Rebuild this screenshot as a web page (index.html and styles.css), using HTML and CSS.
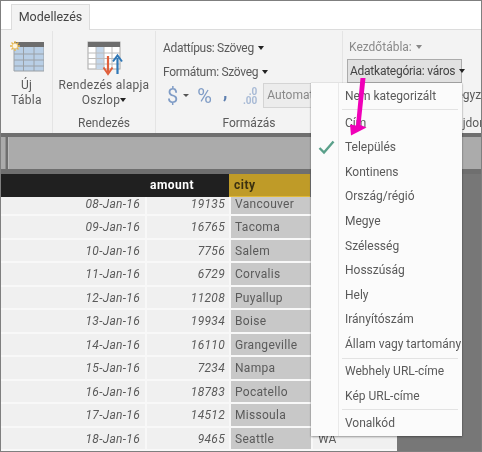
FILE: index.html
```html
<!DOCTYPE html>
<html lang="hu">
<head>
<meta charset="utf-8">
<title>Modellezés</title>
<link rel="stylesheet" href="styles.css">
</head>
<body>
<div class="frame">
  <div class="tabbar"><div class="tab">Modellezés</div></div>
  <div class="ribbon">
    <section class="group g-new">
      <div class="group-body center">
        <svg class="ico-new" width="36" height="36" viewBox="0 0 36 36">
          <rect x="6" y="1" width="30" height="29" fill="#b9cfe6" stroke="none"/>
          <rect x="6" y="1" width="30" height="5" fill="#6d6d6d"/>
          <path d="M6 6V30H36V6M6 13H36M6 19H36M6 25H36M15.500 6V30M26 6V30" fill="none" stroke="#9aa0a6" stroke-width="1"/>
          <path d="M7 0V10M2 5H12M3.500 1.500L10.500 8.500M10.500 1.500L3.500 8.500" stroke="#e8b84a" stroke-width="1.300"/>
          <circle cx="7" cy="5" r="2.800" fill="#fdf6e0" stroke="#eab95a" stroke-width=".7"/>
        </svg>
        <div class="big-label">Új<br>Tábla</div>
      </div>
    </section>
    <section class="group g-sort">
      <div class="group-body center">
        <svg class="ico-sort" width="36" height="36" viewBox="0 0 36 36">
          <rect x="1" y="1" width="32" height="27" fill="#fff" stroke="#a8a8a8"/>
          <rect x="1" y="1" width="32" height="5" fill="#6d6d6d"/>
          <rect x="9" y="6" width="8" height="22" fill="#c5d7ea"/>
          <path d="M1 12H33M1 17.500H33M1 23H33M9 6V28M17 6V28M25 6V28" stroke="#bcbcbc" fill="none"/>
          <path d="M21 15V31" stroke="#e0603c" stroke-width="2.200"/>
          <path d="M16.500 26.500L21 33L25.500 26.500" fill="none" stroke="#e0603c" stroke-width="2"/>
          <path d="M30.500 17V33" stroke="#2f78b7" stroke-width="2.200"/>
          <path d="M26 20.500L30.500 14.500L35 20.500" fill="none" stroke="#2f78b7" stroke-width="2"/>
        </svg>
        <div class="big-label">Rendezés alapja<br>Oszlop<span class="caret"></span></div>
      </div>
      <div class="group-label">Rendezés</div>
    </section>
    <section class="group g-format">
      <div class="group-body">
        <div class="r-row tight">Adattípus: Szöveg<span class="caret gap"></span></div>
        <div class="r-row tight">Formátum: Szöveg<span class="caret gap"></span></div>
        <div class="r-row tools">
          <span class="sym dollar">$</span>
          <span class="caret small"></span>
          <span class="sym percent">%</span>
          <span class="sym comma">,</span>
          <span class="decimals"><span>.0</span><span>.00</span></span>
          <span class="auto">Automatikus</span>
        </div>
      </div>
      <div class="group-label">Formázás</div>
    </section>
    <section class="group g-props">
      <div class="group-body">
        <div class="r-row muted">Kezdőtábla:<span class="caret gap grey"></span></div>
        <div class="cat-btn">Adatkategória: város<span class="caret gap"></span></div>
        <div class="r-row behind">Megjegyzés</div>
      </div>
      <div class="group-label props-label">Tulajdonságok</div>
    </section>
  </div>
  <div class="formula-wrap">
    <div class="formula-stub"></div>
    <div class="formula"></div>
  </div>
  <div class="table-area">
    <div class="table">
      <div class="thead">
        <div class="th c-date"></div>
        <div class="th c-amount">amount</div>
        <div class="th c-city">city</div>
      </div>
      <div class="tbody">
        <div class="rows">
          <div class="row"><div class="c-date">08-Jan-16</div><div class="c-amount">19135</div><div class="c-city">Vancouver</div><div class="c-state">WA</div></div>
          <div class="row"><div class="c-date">09-Jan-16</div><div class="c-amount">16765</div><div class="c-city">Tacoma</div><div class="c-state">WA</div></div>
          <div class="row"><div class="c-date">10-Jan-16</div><div class="c-amount">7756</div><div class="c-city">Salem</div><div class="c-state">OR</div></div>
          <div class="row"><div class="c-date">11-Jan-16</div><div class="c-amount">6729</div><div class="c-city">Corvalis</div><div class="c-state">OR</div></div>
          <div class="row"><div class="c-date">12-Jan-16</div><div class="c-amount">11208</div><div class="c-city">Puyallup</div><div class="c-state">WA</div></div>
          <div class="row"><div class="c-date">13-Jan-16</div><div class="c-amount">19934</div><div class="c-city">Boise</div><div class="c-state">ID</div></div>
          <div class="row"><div class="c-date">14-Jan-16</div><div class="c-amount">16110</div><div class="c-city">Grangeville</div><div class="c-state">ID</div></div>
          <div class="row"><div class="c-date">15-Jan-16</div><div class="c-amount">7234</div><div class="c-city">Nampa</div><div class="c-state">ID</div></div>
          <div class="row"><div class="c-date">16-Jan-16</div><div class="c-amount">18783</div><div class="c-city">Pocatello</div><div class="c-state">ID</div></div>
          <div class="row"><div class="c-date">17-Jan-16</div><div class="c-amount">14512</div><div class="c-city">Missoula</div><div class="c-state">MT</div></div>
          <div class="row"><div class="c-date">18-Jan-16</div><div class="c-amount">9465</div><div class="c-city">Seattle</div><div class="c-state">WA</div></div>
          <div class="row"><div class="c-date"></div><div class="c-amount"></div><div class="c-city"></div><div class="c-state"></div></div>
        </div>
      </div>
    </div>
  </div>
  <div class="menu">
    <div class="item">Nem kategorizált</div>
    <div class="sep"></div>
    <div class="item">Cím</div>
    <div class="item checked">
      <svg class="check" width="17" height="15" viewBox="0 0 17 15"><path d="M1.500 8L6 12.500L15.500 1.500" fill="none" stroke="#5aa08a" stroke-width="2.400"/></svg>
      Település
    </div>
    <div class="item">Kontinens</div>
    <div class="item">Ország/régió</div>
    <div class="item">Megye</div>
    <div class="item">Szélesség</div>
    <div class="item">Hosszúság</div>
    <div class="item">Hely</div>
    <div class="item">Irányítószám</div>
    <div class="item">Állam vagy tartomány</div>
    <div class="sep"></div>
    <div class="item">Webhely URL-címe</div>
    <div class="item">Kép URL-címe</div>
    <div class="sep"></div>
    <div class="item">Vonalkód</div>
  </div>
  <svg class="arrow" width="30" height="64" viewBox="0 0 30 64">
    <path d="M15.500 0H20.500L15.500 47L21.500 49.500L6 57.500L5 46.500L11 47.500Z" fill="#f000b8"/>
  </svg>
</div>
</body>
</html>
```

FILE: styles.css
```css
* { box-sizing: border-box; }
html, body { margin: 0; padding: 0; background: #fff; }
body { width: 482px; height: 452px; overflow: hidden; font-family: Roboto, "Open Sans", sans-serif; font-size: 12px; color: #5a5a5a; }

.frame { position: relative; width: 482px; height: 452px; border: 1px solid #7f7f7f; overflow: hidden; background: #777; display: flex; flex-direction: column; filter: blur(.35px); }

.tabbar { height: 29px; flex: none; background: #fff; border-bottom: 1px solid #dcdcdc; padding: 3px 0 0 10px; }
.tab { width: 79px; height: 26px; background: #f3f3f3; border: 1px solid #dcdcdc; border-bottom: none; text-align: center; line-height: 24px; color: #444; font-size: 12.500px; }

.ribbon { height: 103px; flex: none; display: flex; background: #f3f3f3; padding-top: 1px; overflow: hidden; }
.group { display: flex; flex-direction: column; height: 100%; border-right: 1px solid #e4e4e4; flex: none; }
.group-body { flex: 1; }
.center { display: flex; flex-direction: column; align-items: center; padding-top: 10px; }
.group-label { height: 20px; line-height: 20px; text-align: center; }
.big-label { line-height: 15px; margin-top: 1px; text-align: center; white-space: nowrap; letter-spacing: .25px; }

.g-new { width: 52px; }
.g-sort { width: 103px; }
.g-format { width: 187px; }
.g-props { flex: 1; border-right: none; min-width: 0; }

.ico-new { display: block; margin: 0 0 0 -2px; }
.ico-sort { display: block; margin: 0 0 0 1px; }

.caret { display: inline-block; width: 0; height: 0; border-left: 3.500px solid transparent; border-right: 3.500px solid transparent; border-top: 4px solid #222; vertical-align: 2px; }
.caret.gap { margin-left: 4px; }
.caret.grey { border-top-color: #888; }
.caret.small { border-left-width: 3px; border-right-width: 3px; border-top: 3px solid #555; margin-left: 5px; }

.g-format .group-body { padding: 5px 0 0 7px; }
.r-row { height: 24px; line-height: 24px; white-space: nowrap; }
.tight { letter-spacing: -.3px; }
.tools { display: flex; align-items: center; height: 25px; margin-top: -1px; }
.sym { color: #7f9cc6; line-height: 1; }
.dollar { font-size: 20px; margin-left: 4px; }
.percent { font-size: 20px; margin-left: 8px; }
.comma { font-size: 18px; font-weight: 700; margin-left: 11px; margin-top: -8px; color: #5d7faf; }
.decimals { display: flex; flex-direction: column; align-items: flex-end; width: 16px; margin-left: 14px; font-size: 10px; font-weight: 700; line-height: 9px; color: #a9bbd6; }
.auto { width: 60px; height: 25px; margin-left: 6px; background: #ececec; border: 1px solid #d4d4d4; padding-left: 3px; line-height: 22px; color: #888; overflow: hidden; white-space: nowrap; flex: none; }

.g-props .group-body { padding: 4px 0 0 4px; }
.muted { color: #8a8a8a; padding-left: 2px; height: 24px; }
.cat-btn { width: 115px; height: 24px; background: #e1e1e1; border: 1px solid #ababab; padding-left: 2px; line-height: 22px; color: #444; white-space: nowrap; letter-spacing: -.25px; }
.behind { margin-left: 83px; }
.props-label { text-align: left; padding-left: 97px; white-space: nowrap; }

.formula-wrap { height: 41px; flex: none; display: flex; gap: 2px; padding: 4px 0 5px 0; background: #6f6f6f; }
.formula-stub { width: 5px; background: #ababab; border-right: 1px solid #8f8f8f; }
.formula { flex: 1; background: #ababab; border-left: 1px solid #bcbcbc; }

.table-area { flex: 1; min-height: 0; background: #777; overflow: hidden; }
.table { width: 396px; height: 100%; display: flex; flex-direction: column; }
.thead { display: flex; height: 23px; flex: none; }
.thead .th { height: 23px; line-height: 22px; font-weight: 700; color: #fff; background: #202020; letter-spacing: .5px; text-align: left; font-style: normal; }
.thead .c-date { width: 145px; }
.thead .c-amount { width: 83px; padding-left: 4px; }
.thead .th.c-city { width: 81px; padding-left: 5px; background: #bf9b28; color: #3a3010; border-bottom: 1px solid #e0b93a; }

.tbody { flex: 1; min-height: 0; overflow: hidden; background: #f8f8f8; }
.rows { margin-top: -4.500px; }
.row { display: flex; gap: 2px; height: 23.500px; padding-bottom: 2px; line-height: 22px; white-space: nowrap; }
.row .c-date, .row .c-amount { font-style: italic; text-align: right; background: #f0f0f0; letter-spacing: .3px; }
.row .c-date { width: 144px; padding-right: 5px; }
.row .c-amount { width: 82px; padding-right: 4px; }
.row .c-city { width: 80px; padding-left: 4px; background: #c8c8c8; letter-spacing: .3px; }
.row .c-state { width: 84px; padding-left: 5px; background: #f0f0f0; }

.menu { position: absolute; left: 310px; top: 82px; width: 151px; height: 353px; padding-top: .5px; background: #fbfbfb; box-shadow: 0 1px 2px rgba(0,0,0,.35), 0 0 1px rgba(0,0,0,.25); padding-left: 34px; }
.menu::before { content: ""; position: absolute; left: 27px; top: 0; bottom: 0; width: 1px; background: #e9e9e9; }
.item { position: relative; height: 24.600px; line-height: 24px; white-space: nowrap; }
.check { position: absolute; left: -27px; top: 5px; }
.sep { height: 2.500px; margin: 0 4px 0 -3px; padding-top: 1px; }
.sep::after { content: ""; display: block; height: 1px; background: #e3e3e3; }

.arrow { position: absolute; left: 344px; top: 77px; }
```
